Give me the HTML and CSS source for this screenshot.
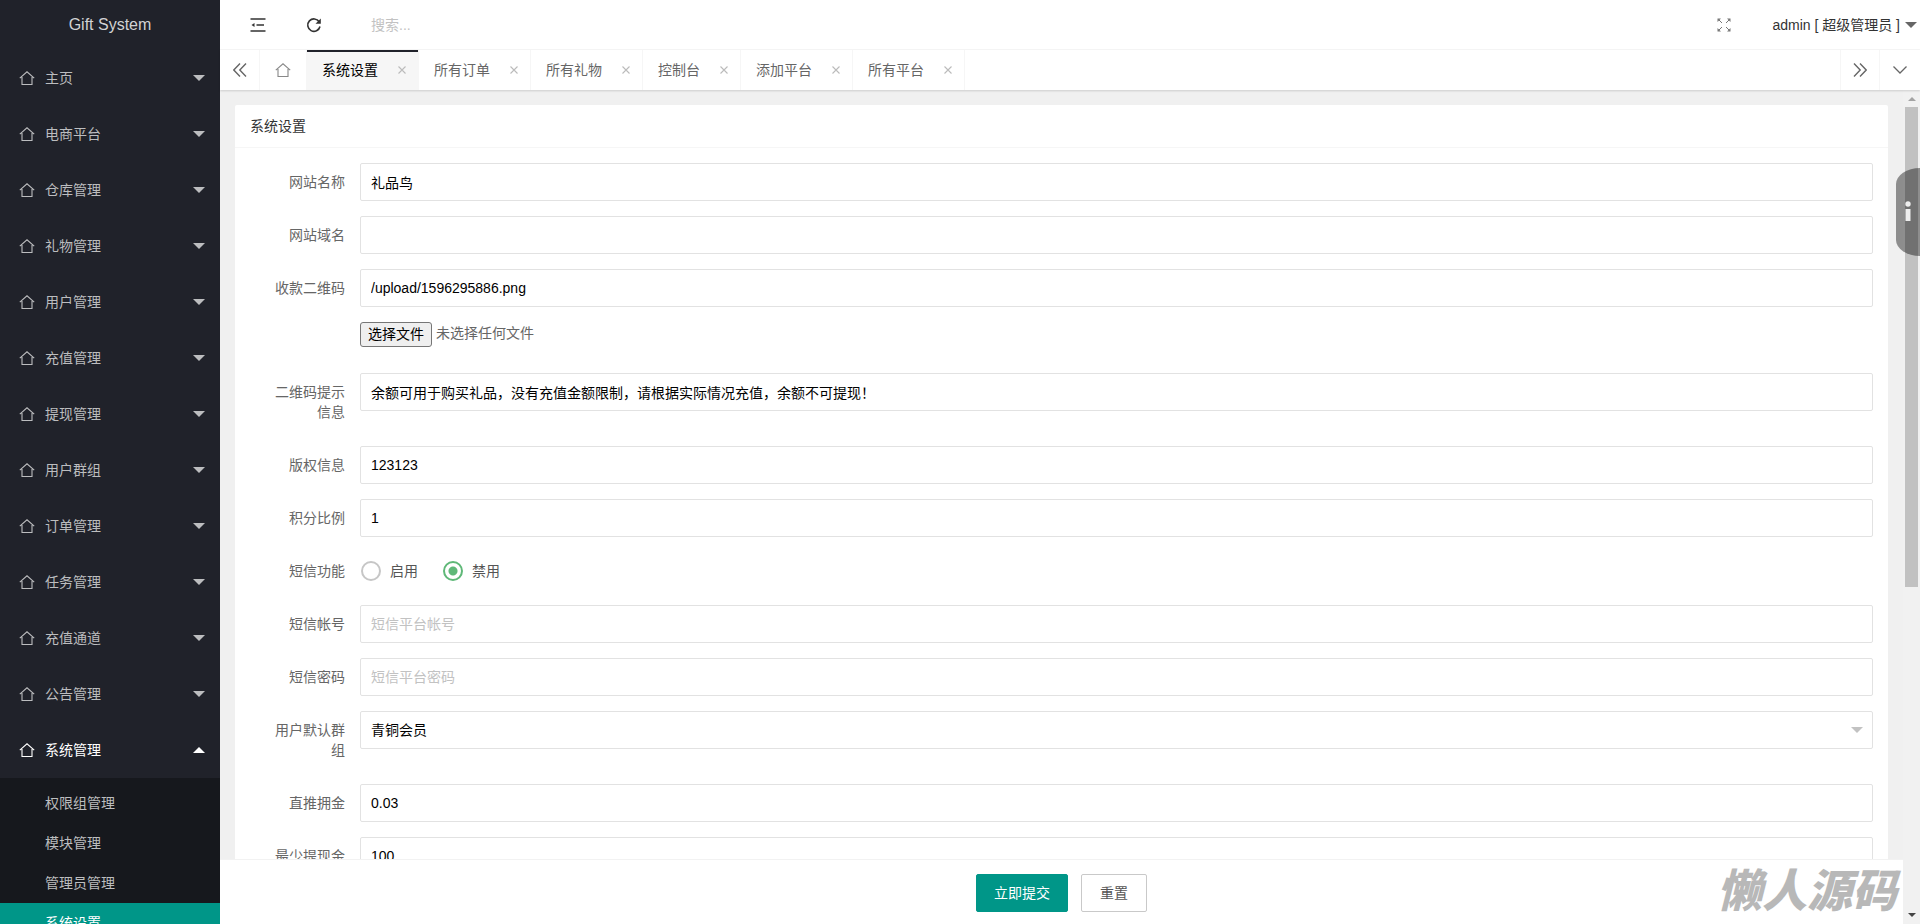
FILE: index.html
```html
<!DOCTYPE html>
<html lang="zh-CN">
<head>
<meta charset="utf-8">
<title>Gift System</title>
<link rel="stylesheet" href="styles.css">
</head>
<body>
<svg class="defs" aria-hidden="true">
  <symbol id="home" viewBox="0 0 16 16"><path d="M.8 8.200 8 1.800l7.200 6.400M3 7v7.500h10V7" fill="none" stroke="currentColor" stroke-width="1.100"/></symbol>
  <symbol id="close" viewBox="0 0 10 10"><path d="M1.5 1.5l7 7M8.500 1.500l-7 7" fill="none" stroke="currentColor" stroke-width="1.100"/></symbol>
</svg>
<div class="app">
  <aside class="side">
    <a class="logo" href="#">Gift System</a>
    <nav class="menu">
      <a class="item" href="#"><svg><use href="#home"/></svg><span>主页</span><i class="caret"></i></a>
      <a class="item" href="#"><svg><use href="#home"/></svg><span>电商平台</span><i class="caret"></i></a>
      <a class="item" href="#"><svg><use href="#home"/></svg><span>仓库管理</span><i class="caret"></i></a>
      <a class="item" href="#"><svg><use href="#home"/></svg><span>礼物管理</span><i class="caret"></i></a>
      <a class="item" href="#"><svg><use href="#home"/></svg><span>用户管理</span><i class="caret"></i></a>
      <a class="item" href="#"><svg><use href="#home"/></svg><span>充值管理</span><i class="caret"></i></a>
      <a class="item" href="#"><svg><use href="#home"/></svg><span>提现管理</span><i class="caret"></i></a>
      <a class="item" href="#"><svg><use href="#home"/></svg><span>用户群组</span><i class="caret"></i></a>
      <a class="item" href="#"><svg><use href="#home"/></svg><span>订单管理</span><i class="caret"></i></a>
      <a class="item" href="#"><svg><use href="#home"/></svg><span>任务管理</span><i class="caret"></i></a>
      <a class="item" href="#"><svg><use href="#home"/></svg><span>充值通道</span><i class="caret"></i></a>
      <a class="item" href="#"><svg><use href="#home"/></svg><span>公告管理</span><i class="caret"></i></a>
      <a class="item open" href="#"><svg><use href="#home"/></svg><span>系统管理</span><i class="caret up"></i></a>
      <div class="submenu">
        <a href="#">权限组管理</a>
        <a href="#">模块管理</a>
        <a href="#">管理员管理</a>
        <a class="current" href="#">系统设置</a>
      </div>
    </nav>
  </aside>

  <div class="main">
    <header class="header">
      <button class="tool" type="button" aria-label="侧边伸缩"><svg width="16" height="14" viewBox="0 0 16 14"><path d="M.5 1h15M6.500 7H14M.5 13h15" fill="none" stroke="#333" stroke-width="1.500"/><path d="M1.500 7l3-2v4z" fill="#333"/></svg></button>
      <button class="tool" type="button" aria-label="刷新"><svg width="16" height="16" viewBox="0 0 16 16"><path d="M13.200 4.800A6.200 6.200 0 1 0 14 9.500" fill="none" stroke="#333" stroke-width="1.600"/><path d="M14.800 1.500v5.300H9.500z" fill="#333"/></svg></button>
      <input class="search" type="text" placeholder="搜索..." aria-label="搜索">
      <button class="full" type="button" aria-label="全屏"><svg width="14" height="14" viewBox="0 0 14 14"><path d="M5 5 1.500 1.500M9 5l3.500-3.500M5 9l-3.500 3.500M9 9l3.500 3.500" fill="none" stroke="#777"/><path d="M.5.500h3.500l-3.500 3.500zM13.500.500v3.500L10 .5zM.5 13.500V10L4 13.500zM13.500 13.500H10l3.500-3.500z" fill="#777"/></svg></button>
      <a class="user" href="#"><span>admin [ 超级管理员 ]</span><i class="caret"></i></a>
    </header>

    <div class="tabs">
      <button class="ctl" type="button" aria-label="向左"><svg width="14" height="14" viewBox="0 0 14 14"><path d="M7 .5.800 7 7 13.500M13 .5 6.800 7l6.200 6.500" fill="none" stroke="#666" stroke-width="1.400"/></svg></button>
      <a class="tab home" href="#" aria-label="主页"><svg><use href="#home"/></svg></a>
      <a class="tab active" href="#">系统设置<svg><use href="#close"/></svg></a>
      <a class="tab" href="#">所有订单<svg><use href="#close"/></svg></a>
      <a class="tab" href="#">所有礼物<svg><use href="#close"/></svg></a>
      <a class="tab" href="#">控制台<svg><use href="#close"/></svg></a>
      <a class="tab" href="#">添加平台<svg><use href="#close"/></svg></a>
      <a class="tab" href="#">所有平台<svg><use href="#close"/></svg></a>
      <button class="ctl next" type="button" aria-label="向右"><svg width="14" height="14" viewBox="0 0 14 14"><path d="M1 .5 7.200 7 1 13.500M7 .5 13.200 7 7 13.500" fill="none" stroke="#666" stroke-width="1.400"/></svg></button>
      <button class="ctl more" type="button" aria-label="更多"><svg width="14" height="8" viewBox="0 0 14 8"><path d="M.5.500 7 7 13.500.5" fill="none" stroke="#666" stroke-width="1.300"/></svg></button>
    </div>

    <div class="frame">
      <form class="page">
        <div class="scroll">
          <section class="card">
            <h1 class="card-title">系统设置</h1>
            <div class="card-body">
              <div class="row"><label class="label" for="f1">网站名称</label><input class="field" id="f1" type="text" value="礼品鸟"></div>
              <div class="row"><label class="label" for="f2">网站域名</label><input class="field" id="f2" type="text"></div>
              <div class="row"><label class="label" for="f3">收款二维码</label><input class="field" id="f3" type="text" value="/upload/1596295886.png"></div>
              <div class="row file-row"><input class="file-input" id="file" type="file"><label class="file-button" for="file">选择文件</label><span>未选择任何文件</span></div>
              <div class="row"><label class="label" for="f4">二维码提示信息</label><input class="field" id="f4" type="text" value="余额可用于购买礼品，没有充值金额限制，请根据实际情况充值，余额不可提现！"></div>
              <div class="row"><label class="label" for="f5">版权信息</label><input class="field" id="f5" type="text" value="123123"></div>
              <div class="row"><label class="label" for="f6">积分比例</label><input class="field" id="f6" type="text" value="1"></div>
              <div class="row" role="radiogroup" aria-labelledby="sms"><span class="label" id="sms">短信功能</span>
                <div class="radios">
                  <label class="radio"><input type="radio" name="sms">启用</label>
                  <label class="radio"><input type="radio" name="sms" checked>禁用</label>
                </div>
              </div>
              <div class="row"><label class="label" for="f7">短信帐号</label><input class="field" id="f7" type="text" placeholder="短信平台帐号"></div>
              <div class="row"><label class="label" for="f8">短信密码</label><input class="field" id="f8" type="text" placeholder="短信平台密码"></div>
              <div class="row"><label class="label" for="f9">用户默认群组</label>
                <div class="select"><select class="field" id="f9"><option>青铜会员</option></select><i class="caret"></i></div>
              </div>
              <div class="row"><label class="label" for="f10">直推拥金</label><input class="field" id="f10" type="text" value="0.03"></div>
              <div class="row"><label class="label" for="f11">最少提现金额</label><input class="field" id="f11" type="text" value="100"></div>
            </div>
          </section>
        </div>
        <footer class="actions">
          <button class="btn primary" type="submit">立即提交</button>
          <button class="btn" type="reset">重置</button>
        </footer>
      </form>
      <div class="scrollbar" aria-hidden="true"><i class="arrow top"></i><div class="track"><div class="thumb"></div></div><i class="arrow bottom"></i></div>
    </div>
  </div>
  <button class="handle" type="button" aria-label="信息"><svg width="6" height="20" viewBox="0 0 6 20"><circle cx="3" cy="3" r="2.700" fill="#eee"/><path d="M.5 8h5v12h-5z" fill="#eee"/></svg></button>
  <div class="watermark">懒人源码</div>
</div>
</body>
</html>
```
FILE: styles.css
```css
* { box-sizing: border-box; }
body {
  margin: 0;
  font: 14px/24px "Liberation Sans", "Noto Sans CJK SC", sans-serif;
  color: #333;
  background: #f0f0f0;
}
a { color: inherit; text-decoration: none; }
button, input, select { font: inherit; color: inherit; }
button { padding: 0; border: 0; background: none; }
.defs { position: absolute; width: 0; height: 0; }
.app { display: flex; height: 100vh; overflow: hidden; position: relative; }

.caret {
  width: 0;
  height: 0;
  flex: none;
  border: 6px solid transparent;
  border-top-color: currentColor;
  border-bottom: 0;
}
.caret.up { border-top: 0; border-bottom: 6px solid currentColor; }

/* Sidebar */
.side { width: 220px; flex: none; overflow: hidden; background: #20222a; color: #bcbdbf; }
.logo {
  display: flex;
  align-items: center;
  justify-content: center;
  height: 50px;
  font-size: 16px;
  color: #d2d3d4;
}
.item { display: flex; align-items: center; height: 56px; padding: 0 15px 0 19px; }
.item svg { width: 16px; height: 16px; margin-right: 10px; }
.item span { flex: 1; }
.item.open { color: #fff; }
.submenu { padding: 5px 0; background: #16181d; }
.submenu a { display: block; padding-left: 45px; line-height: 40px; }
.submenu .current { background: #009688; color: #fff; }

/* Top bar */
.main { flex: 1; min-width: 0; display: flex; flex-direction: column; }
.header { display: flex; align-items: center; flex: none; height: 50px; padding-top: 1px; background: #fff; border-bottom: 1px solid #f6f6f6; }
.tool { display: flex; justify-content: center; width: 16px; margin-left: 30px; }
.tool + .tool { margin-left: 40px; }
.search { width: 200px; margin-left: 49px; padding: 0; border: 0; outline: 0; }
::placeholder { color: #c2c2c2; opacity: 1; }
.full { display: flex; margin-left: auto; }
.user { display: flex; align-items: center; gap: 5px; margin: 0 3px 0 41px; }
.user .caret { color: #666; }

/* Page tabs */
.tabs {
  display: flex;
  flex: none;
  height: 40px;
  background: #fff;
  color: #666;
  box-shadow: 0 1px 2px rgba(0, 0, 0, .15);
  position: relative;
}
.ctl { display: flex; align-items: center; justify-content: center; width: 40px; border-right: 1px solid #f6f6f6; }
.ctl.next { margin-left: auto; border-left: 1px solid #f6f6f6; }
.ctl.more { border-right: 0; }
.tab { display: flex; align-items: center; gap: 19px; padding: 0 11px 0 15px; border-right: 1px solid #f6f6f6; }
.tab svg { width: 10px; height: 10px; color: #bbb; }
.home { padding: 0 15px; }
.home svg { width: 16px; height: 16px; color: #888; }
.tab.active { background: #f6f6f6; color: #000; box-shadow: inset 0 2px #20222a; }

/* Content frame */
.frame { flex: 1; min-height: 0; display: flex; }
.page { flex: 1; min-width: 0; display: flex; flex-direction: column; }
.scroll { flex: 1; min-height: 0; overflow: hidden; padding: 15px 15px 0; }
.card { background: #fff; border-radius: 2px; }
.card-title { margin: 0; padding: 0 15px; font-size: 14px; font-weight: 400; line-height: 42px; border-bottom: 1px solid #f6f6f6; }
.card-body { padding: 15px; }
.row { display: flex; align-items: flex-start; margin-bottom: 15px; }
.label { flex: none; width: 110px; padding: 9px 15px; line-height: 20px; text-align: right; color: #666; }
.field {
  flex: 1;
  min-width: 0;
  width: 100%;
  height: 38px;
  padding: 0 10px;
  border: 1px solid #e2e2e2;
  border-radius: 2px;
  background: #fff;
  color: #000;
  outline: 0;
}
.select { position: relative; flex: 1; }
.select .field { display: block; appearance: none; }
.select .caret { position: absolute; right: 10px; top: 16px; color: #c2c2c2; }
.file-row { align-items: flex-start; gap: 4px; height: 36px; padding-left: 110px; line-height: 23px; color: #666; }
.file-input { position: absolute; width: 1px; height: 1px; opacity: 0; }
.file-button { padding: 0 7px; border: 1px solid #767676; border-radius: 3px; background: #efefef; color: #000; }
.radios { display: flex; gap: 25px; height: 38px; padding-left: 1px; }
.radio { display: flex; align-items: center; gap: 9px; color: #555; }
.radio input {
  appearance: none;
  width: 20px;
  height: 20px;
  margin: 0;
  border: 2px solid #c6c6c6;
  border-radius: 50%;
}
.radio input:checked { border-color: #5fb878; background: radial-gradient(circle, #5fb878 4px, transparent 5px); }
.actions {
  display: flex;
  justify-content: center;
  flex: none;
  gap: 13px;
  height: 65px;
  padding-top: 14px;
  background: #fff;
  border-top: 1px solid #f2f2f2;
}
.btn { height: 38px; padding: 0 18px; border: 1px solid #c9c9c9; border-radius: 2px; background: #fff; color: #555; }
.btn.primary { padding: 0 17px; border-color: #009688; background: #009688; color: #fff; }

/* Scrollbar */
.scrollbar { display: flex; flex-direction: column; width: 17px; background: #f1f1f1; padding: 7px 2px; }
.track { flex: 1; padding: 6px 0; }
.thumb { height: 60%; background: #c1c1c1; }
.arrow { align-self: center; border: 4px solid transparent; }
.arrow.top { border-top: 0; border-bottom-color: #a3a3a3; }
.arrow.bottom { border-bottom: 0; border-top-color: #444; }

/* Overlays */
.handle {
  position: absolute;
  right: 0;
  top: 168px;
  display: flex;
  align-items: center;
  width: 24px;
  height: 88px;
  padding: 0 0 2px 9px;
  border-radius: 24px 0 0 24px / 16px 0 0 16px;
  background: rgba(0, 0, 0, .41);
}
.watermark {
  position: absolute;
  right: 23px;
  bottom: 6px;
  font: italic 900 45px/60px "Noto Sans CJK SC", sans-serif;
  color: #b8b8b8;
}
```
